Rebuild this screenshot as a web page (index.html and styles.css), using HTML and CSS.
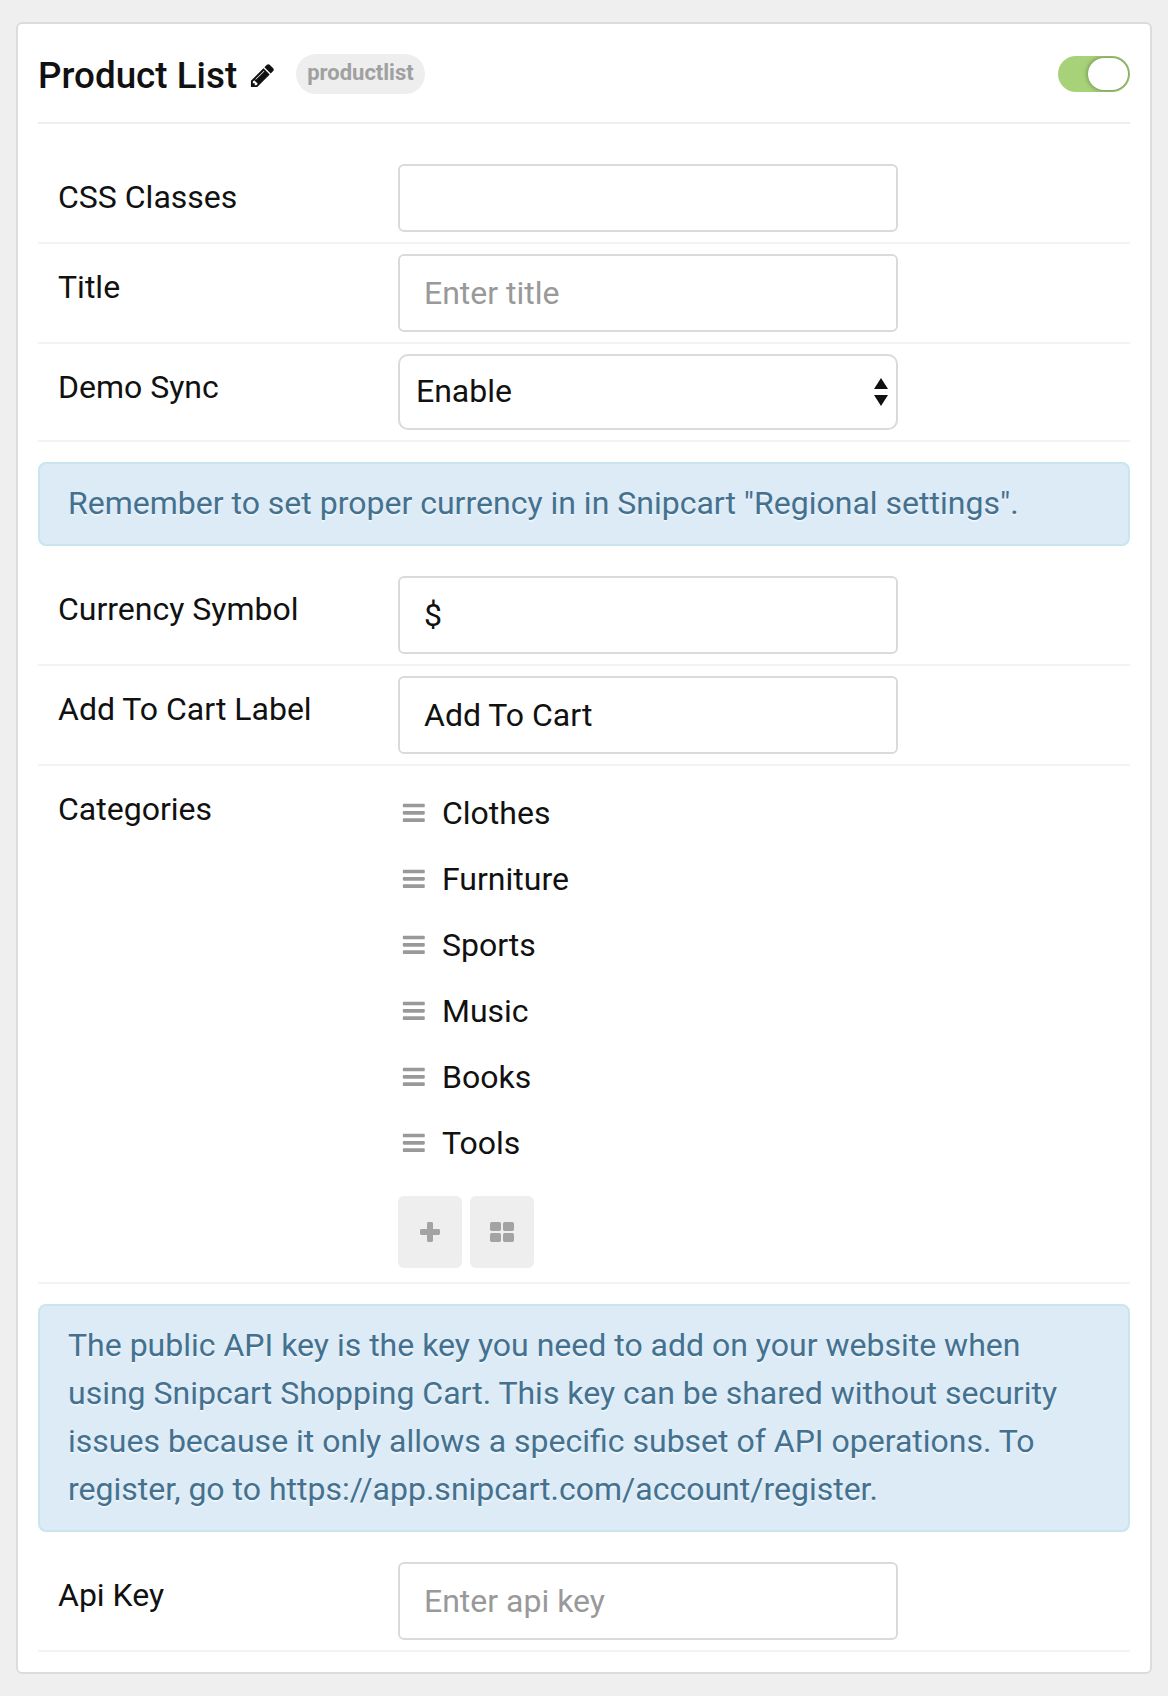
FILE: index.html
```html
<!DOCTYPE html>
<html lang="en">
<head>
<meta charset="utf-8">
<title>Product List</title>
<link rel="stylesheet" href="styles.css">
</head>
<body>
<svg width="0" height="0" class="sprite" aria-hidden="true">
  <symbol id="bars" viewBox="0 0 1792 1792"><path d="M1664 1344v128q0 26-19 45t-45 19h-1408q-26 0-45-19t-19-45v-128q0-26 19-45t45-19h1408q26 0 45 19t19 45zm0-512v128q0 26-19 45t-45 19h-1408q-26 0-45-19t-19-45v-128q0-26 19-45t45-19h1408q26 0 45 19t19 45zm0-512v128q0 26-19 45t-45 19h-1408q-26 0-45-19t-19-45v-128q0-26 19-45t45-19h1408q26 0 45 19t19 45z"/></symbol>
</svg>
<main class="card">
  <header class="card-header">
    <h1 class="card-title">Product List</h1>
    <svg class="pencil" viewBox="0 0 1792 1792"><path d="M491 1536l91-91-235-235-91 91v107h128v128h107zm523-928q0-22-22-22-10 0-17 7l-542 542q-7 7-7 17 0 22 22 22 10 0 17-7l542-542q7-7 7-17zm-54-192l416 416-832 832h-416v-416zm683 96q0 53-37 90l-166 166-416-416 166-165q36-38 90-38 53 0 91 38l235 234q37 39 37 91z"/></svg>
    <span class="badge">productlist</span>
    <span class="toggle"><span class="knob"></span></span>
  </header>

  <div class="row">
    <div class="label">CSS Classes</div>
    <div class="input input-short"></div>
  </div>
  <div class="row">
    <div class="label">Title</div>
    <div class="input placeholder">Enter title</div>
  </div>
  <div class="row">
    <div class="label">Demo Sync</div>
    <div class="select"><span>Enable</span>
      <svg class="arrows" viewBox="0 0 14 28"><path d="M7 0l7 11H0zM0 17h14L7 28z"/></svg>
    </div>
  </div>

  <p class="notice">Remember to set proper currency in in Snipcart "Regional settings".</p>

  <div class="row">
    <div class="label">Currency Symbol</div>
    <div class="input">$</div>
  </div>
  <div class="row">
    <div class="label">Add To Cart Label</div>
    <div class="input">Add To Cart</div>
  </div>
  <div class="row">
    <div class="label">Categories</div>
    <div class="categories">
      <ul class="list">
        <li><svg class="icon"><use href="#bars"/></svg>Clothes</li>
        <li><svg class="icon"><use href="#bars"/></svg>Furniture</li>
        <li><svg class="icon"><use href="#bars"/></svg>Sports</li>
        <li><svg class="icon"><use href="#bars"/></svg>Music</li>
        <li><svg class="icon"><use href="#bars"/></svg>Books</li>
        <li><svg class="icon"><use href="#bars"/></svg>Tools</li>
      </ul>
      <div class="actions">
        <span class="button"><svg viewBox="0 0 20 20" width="20" height="20"><path d="M8.4 0h3.2q1.4 0 1.4 1.4V7h5.6q1.4 0 1.4 1.4v3.2q0 1.4-1.4 1.4H13v5.6q0 1.4-1.4 1.4H8.4Q7 20 7 18.600V13H1.400Q0 13 0 11.600V8.400Q0 7 1.400 7H7V1.400Q7 0 8.400 0z"/></svg></span>
        <span class="button"><svg viewBox="0 0 24 20" width="24" height="20"><rect width="11" height="9" rx="1.800"/><rect x="13" width="11" height="9" rx="1.800"/><rect y="11" width="11" height="9" rx="1.800"/><rect x="13" y="11" width="11" height="9" rx="1.800"/></svg></span>
      </div>
    </div>
  </div>

  <p class="notice">The public API key is the key you need to add on your website when using Snipcart Shopping Cart. This key can be shared without security issues because it only allows a specific subset of API operations. To register, go to https://app.snipcart.com/account/register.</p>

  <div class="row">
    <div class="label">Api Key</div>
    <div class="input placeholder">Enter api key</div>
  </div>
</main>
</body>
</html>
```
FILE: styles.css
```css
* { box-sizing: border-box; }

body {
  margin: 0;
  padding: 22px 16px;
  background: #efefef;
  color: #111;
  font: 400 32px/48px Roboto, sans-serif;
}

.sprite { display: block; }

.card {
  height: 1652px;
  padding: 0 20px;
  background: #fff;
  border: 2px solid #dcdcdc;
  border-radius: 6px;
}

.card-header {
  display: flex;
  align-items: center;
  height: 100px;
  margin-bottom: 30px;
  padding-top: 2px;
  border-bottom: 2px solid #eee;
}

.card-title {
  margin: 4px 0 0;
  font-size: 36.800px;
  font-weight: 500;
}

.pencil {
  width: 27px;
  height: 27px;
  margin: 3px 0 0 11.500px;
  fill: #111;
}

.badge {
  height: 40px;
  margin-left: 20px;
  padding: 0 11.500px;
  border-radius: 20px;
  background: #eee;
  color: #a0a0a0;
  font-size: 22px;
  font-weight: 700;
  line-height: 37px;
}

.toggle {
  display: flex;
  justify-content: flex-end;
  width: 72px;
  height: 36px;
  margin-left: auto;
  padding: 2px;
  border-radius: 18px;
  background: #a8d279;
  overflow: hidden;
}

.knob {
  width: 40px;
  border-radius: 16px;
  background: #fff;
  box-shadow: 0 0 4px 1px rgba(0, 0, 0, .3);
}

.row {
  display: flex;
  padding: 10px 0;
  border-bottom: 2px solid #f3f3f3;
}

.label {
  width: 360px;
  padding: 9px 0 0 20px;
}

.input,
.select {
  display: flex;
  align-items: center;
  width: 500px;
  height: 78px;
  padding: 0 24px;
  border: 2px solid #dadada;
  border-radius: 6px;
}

.input-short { height: 68px; }

.placeholder { color: #999; }

.select {
  justify-content: space-between;
  height: 76px;
  padding: 0 8px 0 16px;
  border-radius: 10px;
}

.select span { padding-bottom: 2px; }

.arrows {
  width: 14px;
  height: 28px;
  fill: #111;
}

.notice {
  margin: 20px 0;
  padding: 15px 28px 17px;
  border: 2px solid #c7e6ed;
  border-radius: 8px;
  background: #ddebf6;
  color: #43718f;
  text-shadow: 0 2px 0 rgba(255, 255, 255, .5);
}

.categories { padding: 13px 0 4px; }

.list {
  margin: 0;
  padding: 0;
  list-style: none;
}

.list li {
  display: flex;
  align-items: center;
  height: 48px;
  margin-bottom: 18px;
}

.icon {
  width: 25.600px;
  height: 25.600px;
  margin: 0 15.400px 0 3px;
  fill: #999;
}

.actions {
  display: flex;
  gap: 8px;
  padding-top: 11px;
}

.button {
  display: flex;
  align-items: center;
  justify-content: center;
  width: 64px;
  height: 72px;
  border-radius: 6px;
  background: #eee;
  fill: #a3a3a3;
}
```
